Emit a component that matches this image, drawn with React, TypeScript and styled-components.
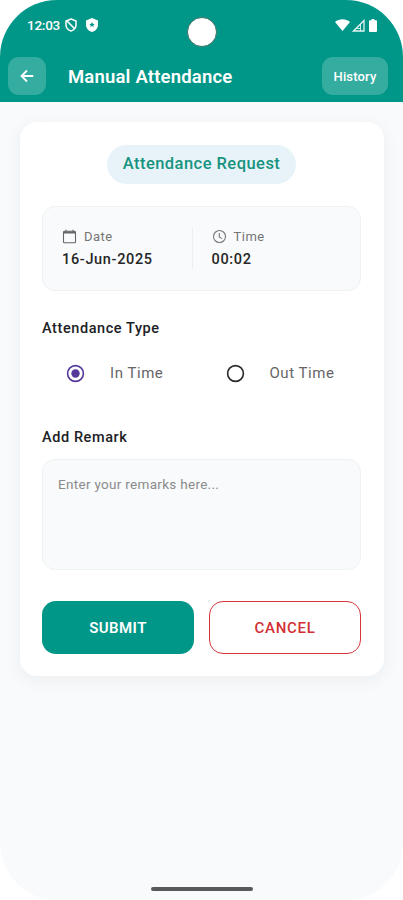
import React, { useState } from "react";
import styled, { createGlobalStyle } from "styled-components";

const GlobalStyle = createGlobalStyle`
  *, *::before, *::after { box-sizing: border-box; }
  html, body { margin: 0; padding: 0; background: #fff; }
  body { font-family: Roboto, "Noto Sans", sans-serif; }
  svg { display: block; flex: none; }
  button, textarea { font-family: inherit; }
`;

const Screen = styled.div`
  position: relative;
  display: flex;
  flex-direction: column;
  width: 403px;
  height: 900px;
  overflow: hidden;
  border-radius: 57px;
  background: #f8fafc;
`;

const TopArea = styled.div`
  flex: none;
  height: 102px;
  background: #009788;
  color: #fff;
`;

const StatusBar = styled.div`
  display: flex;
  align-items: center;
  height: 50px;
  padding: 0 26px 0 27px;
`;

const Clock = styled.span`
  width: 38px;
  font-size: 13.5px;
  font-weight: 500;
  letter-spacing: -0.25px;
  white-space: nowrap;
`;

const StatusIcons = styled.div<{ $gap: number; $end?: boolean }>`
  display: flex;
  align-items: center;
  gap: ${(p) => p.$gap}px;
  margin-left: ${(p) => (p.$end ? "auto" : "0")};
`;

const Camera = styled.div`
  position: absolute;
  left: 187px;
  top: 17px;
  width: 30px;
  height: 30px;
  border: 1px solid #3f6f67;
  border-radius: 50%;
  background: #fff;
`;

const AppBar = styled.header`
  display: flex;
  align-items: center;
  height: 52px;
  padding: 0 15px 0 8px;
`;

const BarButton = styled.button<{ $width: number }>`
  display: flex;
  align-items: center;
  justify-content: center;
  width: ${(p) => p.$width}px;
  height: 38px;
  padding: 0;
  border: 0;
  border-radius: 11px;
  background: #35aca0;
  color: #fff;
  font-size: 13px;
  font-weight: 500;
  letter-spacing: 0.15px;
`;

const Title = styled.h1`
  flex: 1;
  margin: 2px 0 0 22px;
  font-size: 18.5px;
  font-weight: 600;
  line-height: 24px;
  letter-spacing: 0.18px;
  white-space: nowrap;
`;

const Card = styled.main`
  display: flex;
  flex-direction: column;
  height: 554px;
  margin: 20px 19px 0 20px;
  padding: 23px 23px 22px 22px;
  border-radius: 17px;
  background: #fff;
  box-shadow: 0 4px 18px rgba(30, 50, 50, 0.06);
`;

const Badge = styled.div`
  align-self: center;
  width: 189px;
  height: 39px;
  border-radius: 20px;
  background: #e7f3f8;
  color: #17937f;
  font-size: 16.5px;
  font-weight: 500;
  line-height: 38px;
  letter-spacing: 0.46px;
  text-align: center;
  white-space: nowrap;
`;

const InfoPanel = styled.section`
  display: flex;
  align-items: center;
  height: 85px;
  margin-top: 22px;
  padding: 0 19px;
  border: 1px solid #edf1f3;
  border-radius: 13px;
  background: #f8fafb;
`;

const InfoItem = styled.div`
  flex: 1;
`;

const InfoDivider = styled.div`
  width: 1px;
  height: 41px;
  margin: 0 19px 0 0;
  background: #eceff1;
`;

const InfoLabel = styled.div`
  display: flex;
  align-items: center;
  gap: 7px;
  height: 20px;
  color: #757575;
  font-size: 13px;
  letter-spacing: 0.5px;
`;

const InfoValue = styled.div`
  margin-top: 3px;
  color: #262626;
  font-size: 14.5px;
  font-weight: 500;
  line-height: 22px;
  letter-spacing: 0.66px;
`;

const SectionTitle = styled.h2<{ $top: number }>`
  margin: ${(p) => p.$top}px 0 0;
  color: #202124;
  font-size: 14.5px;
  font-weight: 500;
  line-height: 20px;
  letter-spacing: 0.58px;
`;

const RadioRow = styled.div`
  display: grid;
  grid-template-columns: 1fr 1fr;
  height: 40px;
  margin-top: 14px;
`;

const RadioOption = styled.button`
  display: flex;
  align-items: center;
  gap: 25px;
  padding: 0 0 0 24px;
  border: 0;
  background: transparent;
  color: #666;
  font-size: 15px;
  letter-spacing: 0.55px;
  white-space: nowrap;
`;

const Remarks = styled.textarea`
  display: block;
  flex: none;
  width: 100%;
  height: 111px;
  margin-top: 11px;
  padding: 15px 15px;
  border: 1px solid #edf2f3;
  border-radius: 13px;
  outline: none;
  resize: none;
  background: #f8fafb;
  color: #333;
  font-size: 13.5px;
  line-height: 18px;
  letter-spacing: 0.3px;
  &::placeholder { color: #8b8b8b; opacity: 1; }
`;

const Actions = styled.div`
  display: grid;
  grid-template-columns: 1fr 1fr;
  gap: 15px;
  height: 53px;
  margin-top: 31px;
`;

const ActionButton = styled.button<{ $outlined?: boolean }>`
  padding: 0;
  border: ${(p) => (p.$outlined ? "1px solid #d3363d" : "0")};
  border-radius: 14px;
  background: ${(p) => (p.$outlined ? "#fff" : "#009788")};
  color: ${(p) => (p.$outlined ? "#d22f36" : "#fff")};
  font-size: 15px;
  font-weight: ${(p) => (p.$outlined ? 500 : 600)};
  letter-spacing: ${(p) => (p.$outlined ? 0.7 : 0.45)}px;
`;

const BottomBar = styled.footer`
  display: flex;
  justify-content: center;
  margin-top: auto;
  padding-bottom: 9px;
`;

const HomeHandle = styled.div`
  width: 102px;
  height: 4px;
  border-radius: 2px;
  background: #58595b;
`;

const NoDataIcon = () => (
  <svg width="12" height="14" viewBox="0 0 12 14" fill="none" stroke="#fff" strokeWidth="1.5">
    <path d="M6 1 11 3v4c0 3-2 5-5 6-3-1-5-3-5-6V3l5-2Z" />
    <path d="m2 3 7.6 7.6" />
  </svg>
);

const ShieldIcon = () => (
  <svg width="12" height="14" viewBox="0 0 12 14">
    <path d="M6 0 12 2.4V7c0 3.3-2.4 5.9-6 7-3.6-1.1-6-3.7-6-7V2.4L6 0Z" fill="#fff" />
    <path d="m6 3.9.8 1.8 1.9.2-1.4 1.3.4 1.9L6 8.1l-1.7 1 .4-1.9-1.4-1.3 1.9-.2L6 3.9Z" fill="#009788" />
  </svg>
);

const WifiIcon = () => (
  <svg width="15" height="12" viewBox="0 0 15 12">
    <path d="M0 3C4.2-.7 10.8-.7 15 3L7.5 12 0 3Z" fill="#fff" />
  </svg>
);

const SignalIcon = () => (
  <svg width="13" height="13" viewBox="0 0 13 13" fill="none" stroke="#e5f5f3">
    <path d="M1.5 12 12 1.5V12H1.5Z" strokeWidth="1.3" />
    <path d="M8.5 5v7M5 9.5h3.5" strokeWidth=".9" />
  </svg>
);

const BatteryIcon = () => (
  <svg width="8" height="13" viewBox="0 0 8 13" fill="#fff">
    <path d="M2.5 0h3v1.2H7a1 1 0 0 1 1 1V12a1 1 0 0 1-1 1H1a1 1 0 0 1-1-1V2.2a1 1 0 0 1 1-1h1.5V0Z" />
  </svg>
);

const BackIcon = () => (
  <svg width="14" height="14" viewBox="0 0 14 14" fill="none" stroke="#fff" strokeWidth="1.8">
    <path d="M13.3 7H1.8M7 1.5 1.500 7 7 12.5" />
  </svg>
);

const CalendarIcon = () => (
  <svg width="15" height="15" viewBox="0 0 15 15" fill="none" stroke="#666" strokeWidth="1.1">
    <rect x="1.5" y="2.3" width="12" height="11.5" rx="1" />
    <path d="M1.5 3.5h12" strokeWidth="2" />
    <path d="M4 .7v2M11 .7v2" />
  </svg>
);

const ClockIcon = () => (
  <svg width="15" height="15" viewBox="0 0 15 15" fill="none" stroke="#777" strokeWidth="1.1">
    <circle cx="7.5" cy="7.5" r="6" />
    <path d="M7.3 4v3.900l2.800 1.700" />
  </svg>
);

const RadioIcon = ({ checked }: { checked: boolean }) => (
  <svg width="19" height="19" viewBox="0 0 19 19" fill="none">
    <circle cx="9.5" cy="9.5" r="7.9" stroke={checked ? "#54399b" : "#292929"} strokeWidth="1.6" />
    {checked && <circle cx="9.5" cy="9.5" r="4.2" fill="#54399b" />}
  </svg>
);

export default function App() {
  const [type, setType] = useState("In Time");
  return (
    <>
      <GlobalStyle />
      <Screen>
        <TopArea>
          <StatusBar>
            <Clock>12:03</Clock>
            <StatusIcons $gap={9}>
              <NoDataIcon />
              <ShieldIcon />
            </StatusIcons>
            <StatusIcons $gap={2} $end>
              <WifiIcon />
              <SignalIcon />
              <span />
              <BatteryIcon />
            </StatusIcons>
          </StatusBar>
          <AppBar>
            <BarButton $width={38} aria-label="Back"><BackIcon /></BarButton>
            <Title>Manual Attendance</Title>
            <BarButton $width={66}>History</BarButton>
          </AppBar>
        </TopArea>
        <Camera />
        <Card>
          <Badge>Attendance Request</Badge>
          <InfoPanel>
            <InfoItem>
              <InfoLabel><CalendarIcon />Date</InfoLabel>
              <InfoValue>16-Jun-2025</InfoValue>
            </InfoItem>
            <InfoDivider />
            <InfoItem>
              <InfoLabel><ClockIcon />Time</InfoLabel>
              <InfoValue>00:02</InfoValue>
            </InfoItem>
          </InfoPanel>
          <SectionTitle $top={28}>Attendance Type</SectionTitle>
          <RadioRow role="radiogroup">
            {["In Time", "Out Time"].map((name) => (
              <RadioOption key={name} role="radio" aria-checked={type === name} onClick={() => setType(name)}>
                <RadioIcon checked={type === name} />
                {name}
              </RadioOption>
            ))}
          </RadioRow>
          <SectionTitle $top={35}>Add Remark</SectionTitle>
          <Remarks placeholder="Enter your remarks here..." />
          <Actions>
            <ActionButton>SUBMIT</ActionButton>
            <ActionButton $outlined>CANCEL</ActionButton>
          </Actions>
        </Card>
        <BottomBar><HomeHandle /></BottomBar>
      </Screen>
    </>
  );
}
